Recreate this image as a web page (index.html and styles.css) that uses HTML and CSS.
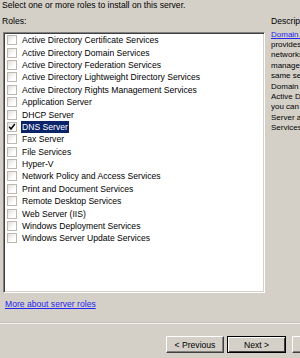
FILE: index.html
```html
<!DOCTYPE html>
<html lang="en">

<head>
    <meta charset="UTF-8">
    <title>Add Roles Wizard - Select Server Roles</title>
    <link rel="stylesheet" href="styles.css">
</head>

<body>
    <div class="wizard">
        <div class="main">
            <div class="roles">
                <p class="intro">Select one or more roles to install on this server.</p>
                <p class="label">Roles:</p>
                <ul class="listbox">
                    <li class="item"><span class="check"></span><span class="name">Active Directory Certificate Services</span></li>
                    <li class="item"><span class="check"></span><span class="name">Active Directory Domain Services</span></li>
                    <li class="item"><span class="check"></span><span class="name">Active Directory Federation Services</span></li>
                    <li class="item"><span class="check"></span><span class="name">Active Directory Lightweight Directory Services</span></li>
                    <li class="item"><span class="check"></span><span class="name">Active Directory Rights Management Services</span></li>
                    <li class="item"><span class="check"></span><span class="name">Application Server</span></li>
                    <li class="item"><span class="check"></span><span class="name">DHCP Server</span></li>
                    <li class="item"><span class="check">
                        <svg width="8" height="8" viewBox="0 0 8 8"><polyline points="1.2,3.8 3,6 6.8,1" fill="none" stroke="#000" stroke-width="1.4"/></svg>
                    </span><span class="name selected">DNS Server</span></li>
                    <li class="item"><span class="check"></span><span class="name">Fax Server</span></li>
                    <li class="item"><span class="check"></span><span class="name">File Services</span></li>
                    <li class="item"><span class="check"></span><span class="name">Hyper-V</span></li>
                    <li class="item"><span class="check"></span><span class="name">Network Policy and Access Services</span></li>
                    <li class="item"><span class="check"></span><span class="name">Print and Document Services</span></li>
                    <li class="item"><span class="check"></span><span class="name">Remote Desktop Services</span></li>
                    <li class="item"><span class="check"></span><span class="name">Web Server (IIS)</span></li>
                    <li class="item"><span class="check"></span><span class="name">Windows Deployment Services</span></li>
                    <li class="item"><span class="check"></span><span class="name">Windows Server Update Services</span></li>
                </ul>
                <a class="more" href="#">More about server roles</a>
            </div>
            <div class="desc">
                <p class="label">Description:</p>
                <p class="desc-text"><a href="#">Domain Name System (DNS) Server</a><br>provides name resolution for TCP/IP<br>networks. DNS Server is easier to<br>manage when it is installed on the<br>same server as Active Directory<br>Domain Services. If you select the<br>Active Directory Domain Services role,<br>you can install and configure DNS<br>Server and Active Directory Domain<br>Services to work together.</p>
            </div>
        </div>
        <div class="separator"></div>
        <div class="buttons">
            <button class="btn">&lt; Previous</button>
            <button class="btn default">Next &gt;</button>
            <button class="btn last">Install</button>
        </div>
    </div>
</body>

</html>
```

FILE: styles.css
```css
body {
    margin: 0;
    background-color: #d4d0c8;
    font-family: "Liberation Sans", Arial, sans-serif;
    font-size: 8.6px;
    color: #000;
    overflow: hidden;
}
.wizard {
    width: 300px;
    height: 358px;
    overflow: hidden;
}
.main {
    display: grid;
    grid-template-columns: 266px 29px;
    column-gap: 5px;
}
.roles {
    padding-left: 2px;
}
.intro {
    margin: 0;
    line-height: 11px;
}
.label {
    margin: 5px 0 0;
    line-height: 11px;
    white-space: nowrap;
}
.listbox {
    list-style: none;
    margin: 5px 0 0 1px;
    padding: 1px;
    width: 262px;
    height: 261px;
    box-sizing: border-box;
    background-color: #fff;
    border: 1px solid;
    border-color: #808080 #fff #fff #808080;
    box-shadow: inset 1px 1px #404040, inset -1px -1px #d4d0c8;
}
.item {
    display: flex;
    align-items: center;
    height: 12.4px;
    padding-left: 2px;
}
.check {
    flex: none;
    display: flex;
    align-items: center;
    justify-content: center;
    width: 10px;
    height: 10px;
    box-sizing: border-box;
    border: 1px solid #bcb8b0;
    background: linear-gradient(135deg, #e2dfd9, #fff 70%);
}
.name {
    margin-left: 4px;
    padding: 0 1px;
    line-height: 12px;
    white-space: nowrap;
}
.name.selected {
    background-color: #0a246a;
    color: #fff;
}
.more {
    display: block;
    margin: 5.5px 0 0 3px;
    line-height: 11px;
    color: #2424f0;
}
.desc {
    padding-top: 11px;
    overflow: hidden;
}
.desc-text {
    margin: 2.5px 0 0;
    font-size: 8px;
    line-height: 10.4px;
    white-space: nowrap;
}
.desc-text a {
    color: #2424f0;
}
.separator {
    margin-top: 12.5px;
    height: 1px;
    background-color: #c4c0b8;
    border-bottom: 1px solid #f6f4f0;
}
.buttons {
    display: flex;
    gap: 3px;
    margin-top: 12px;
    padding-left: 166px;
}
.btn {
    flex: none;
    width: 58px;
    height: 17px;
    box-sizing: border-box;
    padding: 0;
    font: inherit;
    color: #000;
    background-color: #d4d0c8;
    border: 1px solid;
    border-color: #fff #404040 #404040 #fff;
    box-shadow: inset -1px -1px #808080;
}
.btn.default {
    width: 59px;
    border-color: #000;
    box-shadow: inset 1px 1px #fff, inset -1px -1px #404040;
}
.btn.last {
    margin-left: 3px;
}
```
